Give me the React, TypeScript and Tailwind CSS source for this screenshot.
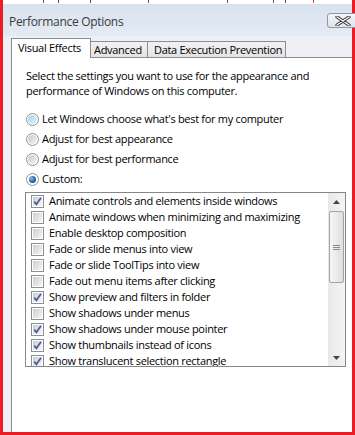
import React from "react";

const items: [string, boolean][] = [
  ["Animate controls and elements inside windows", true],
  ["Animate windows when minimizing and maximizing", false],
  ["Enable desktop composition", false],
  ["Fade or slide menus into view", false],
  ["Fade or slide ToolTips into view", false],
  ["Fade out menu items after clicking", false],
  ["Show preview and filters in folder", true],
  ["Show shadows under menus", false],
  ["Show shadows under mouse pointer", true],
  ["Show thumbnails instead of icons", true],
  ["Show translucent selection rectangle", true],
];

function Checkbox({ checked }: { checked: boolean }) {
  return (
    <span className="flex h-[13px] w-[13px] shrink-0 items-center justify-center border border-[#8f8f8f] bg-white">
      <span className="relative flex h-[9px] w-[9px] items-center justify-center bg-linear-to-br from-[#c9cdd3] to-[#f6f6f6]">
        {checked && (
          <svg width="11" height="11" viewBox="0 0 11 11" className="absolute -top-[1px] -left-[1px]">
            <path d="M2.2 5.6 L4.4 8.3 L9 1.8" fill="none" stroke="#4a5f97" strokeWidth="1.7" />
          </svg>
        )}
      </span>
    </span>
  );
}

function Radio({ state }: { state: "normal" | "hover" | "checked" }) {
  return (
    <span className="flex h-[13px] w-[13px] shrink-0 items-center justify-center rounded-full border border-[#8f8f8f] bg-white">
      {state === "checked" ? (
        <span className="h-[7px] w-[7px] rounded-full bg-radial-[at_35%_35%] from-[#8fc1ea] via-[#2f6bb0] to-[#173a6a]" />
      ) : state === "hover" ? (
        <span className="h-[9px] w-[9px] rounded-full bg-linear-to-br from-[#9fd0f0] to-[#e4f3fc]" />
      ) : (
        <span className="h-[9px] w-[9px] rounded-full bg-linear-to-br from-[#c4c8ce] to-[#f5f5f5]" />
      )}
    </span>
  );
}

function Scrollbar() {
  return (
    <div className="flex w-[17px] shrink-0 flex-col bg-linear-to-r from-[#e8e8e8] to-[#f4f4f4]">
      <div className="flex h-[17px] items-center justify-center">
        <svg width="7" height="4" viewBox="0 0 7 4">
          <path d="M0 4 L3.5 0 L7 4 Z" fill="#444" />
        </svg>
      </div>
      <div className="px-px pt-px">
        <div className="flex h-[72px] flex-col items-center justify-center gap-[1px] rounded-[2px] border border-[#a3a3a3] bg-linear-to-r from-[#f6f6f6] to-[#dedede]">
          <span className="h-px w-[7px] bg-[#8a8a8a]" />
          <span className="h-px w-[7px] bg-[#8a8a8a]" />
          <span className="h-px w-[7px] bg-[#8a8a8a]" />
        </div>
      </div>
      <div className="flex-1" />
      <div className="flex h-[17px] items-center justify-center">
        <svg width="7" height="4" viewBox="0 0 7 4">
          <path d="M0 0 L3.5 4 L7 0 Z" fill="#444" />
        </svg>
      </div>
    </div>
  );
}

export default function App() {
  return (
    <div className="flex h-[435px] w-[355px] flex-col overflow-hidden bg-[#ec1c24] px-[3px] pb-[3px] font-['Open_Sans','Noto_Sans',sans-serif] text-[11px] tracking-[-0.3px] text-black">
      <svg width="349" height="4" className="shrink-0 bg-white">
        {[40, 55, 87, 145, 224, 270, 282].map((x) => (
          <rect key={x} x={x} y={0} width={1} height={3} fill="#555" />
        ))}
        <rect x={310} y={0} width={1} height={3} fill="#e33" />
      </svg>
      <div className="relative flex flex-1 flex-col bg-[#eef0f5]">
        <div className="relative h-[32px] shrink-0 bg-linear-to-b from-[#d8e2ee] to-[#e4ebf4] pl-[6px] pt-[10px]">
          <span className="text-[12px] leading-[16px] text-[#3a3a3a]">Performance Options</span>
          <div className="absolute left-[324px] top-[9px] flex h-[15px] w-[43px] items-center rounded-[3px] border border-[#8d96a3] bg-linear-to-b from-[#f3f6f9] to-[#dde4ec] pl-[7px]">
            <svg width="16" height="10" viewBox="0 0 16 10">
              <path d="M2 1 L14 9 M14 1 L2 9" stroke="#333" strokeWidth="3.2" strokeLinecap="round" />
              <path d="M2 1 L14 9 M14 1 L2 9" stroke="#fff" strokeWidth="1.4" strokeLinecap="round" />
            </svg>
          </div>
        </div>
        <div className="relative z-10 mt-[2px] -mb-px flex h-[20px] items-end pl-[8px]">
          <div className="h-[20px] w-[80px] border-x border-t border-[#898c95] bg-white pl-[6px] pt-[2px] leading-[14px]">
            Visual Effects
          </div>
          <div className="h-[17px] w-[57px] border-y border-r border-[#898c95] bg-linear-to-b from-[#f2f2f2] to-[#e3e3e3] pl-[3px] pt-[1px] leading-[14px]">
            Advanced
          </div>
          <div className="h-[17px] w-[138px] border-y border-r border-[#898c95] bg-linear-to-b from-[#f2f2f2] to-[#e3e3e3] pl-[6px] pt-[1px] leading-[14px]">
            Data Execution Prevention
          </div>
        </div>
        <div className="ml-[8px] flex flex-1 flex-col border-l border-t border-[#898c95] bg-white pl-[13px] pt-[10px]">
          <p className="ml-px leading-[15px]">
            Select the settings you want to use for the appearance and
            <br />
            performance of Windows on this computer.
          </p>
          <div className="mt-[11px] flex flex-col">
            {[
              ["Let Windows choose what's best for my computer", "hover"],
              ["Adjust for best appearance", "normal"],
              ["Adjust for best performance", "normal"],
              ["Custom:", "checked"],
            ].map(([label, state]) => (
              <div key={label} className="flex h-[20px] items-center gap-[3px] pl-px">
                <Radio state={state as "normal" | "hover" | "checked"} />
                <span>{label}</span>
              </div>
            ))}
          </div>
          <div className="mt-[3px] flex h-[175px] w-[321px] border border-[#838790]">
            <div className="flex-1 overflow-hidden">
              {items.map(([label, checked]) => (
                <div key={label} className="flex h-[16px] items-center gap-[5px] pl-[5px] leading-[16px]">
                  <Checkbox checked={checked} />
                  <span className="whitespace-nowrap">{label}</span>
                </div>
              ))}
            </div>
            <Scrollbar />
          </div>
        </div>
      </div>
    </div>
  );
}
